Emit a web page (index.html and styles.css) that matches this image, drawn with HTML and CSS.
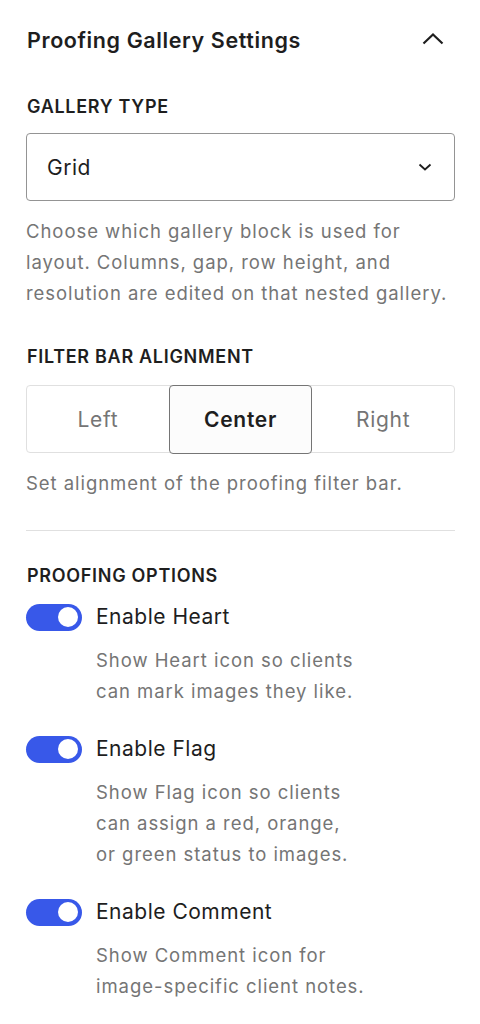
FILE: index.html
```html
<!DOCTYPE html>
<html lang="en">
<head>
    <meta charset="UTF-8">
    <meta name="viewport" content="width=device-width, initial-scale=1.0">
    <title>Proofing Gallery Settings</title>
    <link rel="stylesheet" href="styles.css">
</head>
<body>
    <div class="panel">
        <div class="panel-header">
            <h2 class="panel-title">Proofing Gallery Settings</h2>
            <svg class="panel-chevron" width="24" height="24" viewBox="0 0 24 24" aria-hidden="true">
                <path d="M2.5 15.5L12 6.5 21.5 15.5" fill="none" stroke="#1e1e1e" stroke-width="2.2"/>
            </svg>
        </div>

        <!-- Gallery type -->
        <div class="field field-first">
            <div class="field-label">Gallery Type</div>
            <div class="select">
                <span>Grid</span>
                <svg width="14" height="10" viewBox="0 0 14 10" aria-hidden="true">
                    <path d="M1.5 2.5L7 7.5 12.5 2.5" fill="none" stroke="#1e1e1e" stroke-width="1.8"/>
                </svg>
            </div>
            <p class="help help-wide">Choose which gallery block is used for layout. Columns, gap, row height, and resolution are edited on that nested gallery.</p>
        </div>

        <!-- Filter bar alignment -->
        <div class="field">
            <div class="field-label">Filter Bar Alignment</div>
            <div class="segmented">
                <button class="segment">Left</button>
                <button class="segment active">Center</button>
                <button class="segment">Right</button>
            </div>
            <p class="help">Set alignment of the proofing filter bar.</p>
        </div>

        <hr class="divider">

        <!-- Proofing options -->
        <div class="field-label options-label">Proofing Options</div>

        <div class="option">
            <div class="option-row">
                <span class="toggle"><span class="knob"></span></span>
                <span class="option-name">Enable Heart</span>
            </div>
            <p class="option-desc">Show Heart icon so clients<br>can mark images they like.</p>
        </div>

        <div class="option">
            <div class="option-row">
                <span class="toggle"><span class="knob"></span></span>
                <span class="option-name">Enable Flag</span>
            </div>
            <p class="option-desc">Show Flag icon so clients<br>can assign a red, orange,<br>or green status to images.</p>
        </div>

        <div class="option">
            <div class="option-row">
                <span class="toggle"><span class="knob"></span></span>
                <span class="option-name">Enable Comment</span>
            </div>
            <p class="option-desc">Show Comment icon for<br>image-specific client notes.</p>
        </div>
    </div>
</body>
</html>
```

FILE: styles.css
```css
/* Page styling */
body {
    font-family: Inter, "Noto Sans", sans-serif;
    background: #fff;
    color: #1e1e1e;
    margin: 0;
}

.panel {
    padding: 26px 25px 40px 26px;
}

/* Header with collapse chevron */
.panel-header {
    display: flex;
    justify-content: space-between;
    align-items: center;
    height: 28px;
}

.panel-title {
    margin: 0 0 0 1px;
    font-size: 21.5px;
    font-weight: 600;
    line-height: 28px;
    letter-spacing: 0.6px;
}

.panel-chevron {
    margin-right: 10px;
}

/* Field blocks */
.field {
    margin-top: 36px;
}

.field-first {
    margin-top: 41px;
}

.field-label {
    font-size: 18px;
    font-weight: 600;
    line-height: 24px;
    letter-spacing: 0.7px;
    text-transform: uppercase;
    margin-left: 1px;
}

.help {
    margin: 15px 0 0;
    font-size: 18.5px;
    line-height: 31px;
    letter-spacing: 0.95px;
    color: #757575;
}

/* last line runs right up to the edge in the design */
.help-wide {
    margin-right: -6px;
}

/* Select box */
.select {
    box-sizing: border-box;
    height: 68px;
    margin-top: 14px;
    border: 1.5px solid #949494;
    border-radius: 4px;
    display: flex;
    align-items: center;
    justify-content: space-between;
    padding: 0 22px 0 20px;
    font-size: 21px;
    letter-spacing: 0.5px;
}

/* Segmented control */
.segmented {
    box-sizing: border-box;
    height: 68px;
    margin-top: 16px;
    border: 1.5px solid #e0e0e0;
    border-radius: 4px;
    display: flex;
}

.segment {
    flex: 1;
    background: none;
    border: none;
    font-family: inherit;
    font-size: 21px;
    letter-spacing: 0.7px;
    color: #757575;
    border-radius: 4px;
    margin: -1.5px 0;
}

.segment.active {
    border: 1.5px solid #757575;
    background: #fcfcfc;
    color: #1e1e1e;
    font-weight: 600;
}

.divider {
    border: none;
    border-top: 1.5px solid #e0e0e0;
    margin: 31px 0 0;
}

.options-label {
    margin-top: 33px;
}

/* Toggle options */
.option {
    margin-top: 28px;
}

.options-label + .option {
    margin-top: 15px;
}

.option-row {
    display: flex;
    align-items: center;
    height: 28px;
}

.toggle {
    width: 56px;
    height: 27px;
    border-radius: 14px;
    background: #3858e9;
    display: flex;
    align-items: center;
    justify-content: flex-end;
    padding-right: 4px;
    box-sizing: border-box;
    margin-right: 14px;
}

.knob {
    width: 20px;
    height: 20px;
    border-radius: 50%;
    background: #fff;
}

.option-name {
    font-size: 21px;
    line-height: 28px;
    letter-spacing: 0.5px;
}

.option-desc {
    margin: 14px 0 0 70px;
    font-size: 18.5px;
    line-height: 31px;
    letter-spacing: 0.95px;
    color: #757575;
}
```
